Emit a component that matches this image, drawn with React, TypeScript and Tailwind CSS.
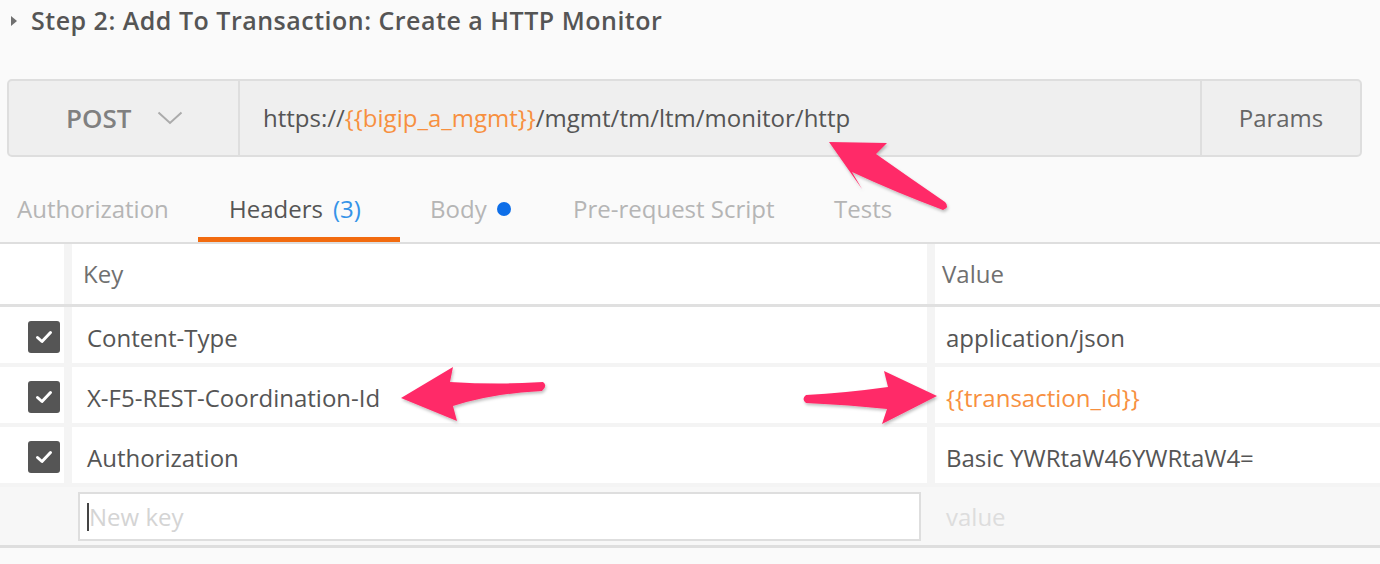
const rows = [
  { key: "Content-Type", value: "application/json", varValue: false },
  { key: "X-F5-REST-Coordination-Id", value: "{{transaction_id}}", varValue: true },
  { key: "Authorization", value: "Basic YWRtaW46YWRtaW4=", varValue: false },
];

function Checkbox() {
  return (
    <div className="w-[32px] h-[32px] rounded-[3px] bg-[#555555] grid place-items-center">
      <svg width="18" height="14" viewBox="0 0 18 14" fill="none">
        <path d="M2.5 7.5 L7 11.5 L15.5 2.5" stroke="white" strokeWidth="3" strokeLinecap="round" strokeLinejoin="round" />
      </svg>
    </div>
  );
}

function Arrows() {
  // callout arrows drawn over the screenshot
  return (
    <svg className="absolute inset-0 pointer-events-none" width="1380" height="564" viewBox="0 0 1380 564">
      <defs>
        <filter id="sh" x="-20%" y="-20%" width="140%" height="140%">
          <feDropShadow dx="1" dy="2" stdDeviation="1.5" floodColor="#000" floodOpacity="0.25" />
        </filter>
      </defs>
      <g fill="#ff2b68" filter="url(#sh)">
        <path d="M829 142 L887 143 L876 154 Q910 178 945 202 Q950 207 943 210 Q895 192 852 172 L862 189 Z" />
        <path d="M401 398 L453 367 L450 382 Q500 385 543 382 Q548 386 542 391 Q495 393 453 406 L457 421 Z" />
        <path d="M937 396 L884 371 L888 387 Q845 393 806 395 Q801 399 806 403 Q850 405 887 409 L882 424 Z" />
      </g>
    </svg>
  );
}

function Tab({ w, pl, active, children }: { w?: string; pl: string; active?: boolean; children: React.ReactNode }) {
  return (
    <div
      className={`${w ?? ""} ${pl} h-[62px] flex items-center gap-[10px] border-b-[5px] ${
        active ? "border-[#f26b0f] text-[#555555]" : "border-transparent text-[#b5b5b5]"
      }`}
    >
      {children}
    </div>
  );
}

export default function App() {
  return (
    <div className="relative w-[1380px] h-[564px] bg-[#fafafa] overflow-hidden font-['Open_Sans',sans-serif] text-[#505050]">
      {/* title */}
      <div className="h-[42px] flex items-center pl-[10px] gap-[13px]">
        <svg width="8" height="12" viewBox="0 0 8 12">
          <path d="M1 1 L7 6 L1 11 Z" fill="#707070" />
        </svg>
        <span className="text-[25px] font-semibold text-[#555555] tracking-[0.5px]">Step 2: Add To Transaction: Create a HTTP Monitor</span>
      </div>

      {/* request bar */}
      <div className="mt-[37px] mx-[7px] w-[1355px] h-[78px] flex border-2 border-[#dedede] rounded-[5px] bg-[#efefef]">
        <div className="w-[231px] flex items-center pl-[57px] gap-[26px] border-r-2 border-[#dedede]">
          <span className="text-[26px] font-semibold text-[#808080]">POST</span>
          <svg width="26" height="14" viewBox="0 0 26 14" fill="none">
            <path d="M1.5 1.5 L13 12 L24.5 1.5" stroke="#ababab" strokeWidth="2" />
          </svg>
        </div>
        <div className="flex-1 flex items-center pl-[23px] text-[24px] text-[#555555]">
          <span>https://</span>
          <span className="text-[#f7903f]">{"{{bigip_a_mgmt}}"}</span>
          <span>/mgmt/tm/ltm/monitor/http</span>
        </div>
        <div className="w-[160px] border-l-2 border-[#dedede] flex items-center justify-center text-[24px] text-[#666666]">
          Params
        </div>
      </div>

      {/* tabs */}
      <div className="h-[85px] flex items-end text-[24px]">
        <Tab w="w-[198px]" pl="pl-[17px]">Authorization</Tab>
        <Tab w="w-[202px]" pl="pl-[31px]" active>
          <span>Headers</span>
          <span className="text-[#3593e8]">(3)</span>
        </Tab>
        <Tab w="w-[143px]" pl="pl-[30px]">
          <span>Body</span>
          <span className="w-[14px] h-[14px] rounded-full bg-[#0d6ee8]" />
        </Tab>
        <Tab w="w-[261px]" pl="pl-[30px]">Pre-request Script</Tab>
        <Tab pl="pl-[30px]">Tests</Tab>
      </div>

      {/* headers table */}
      <div className="border-t-2 border-[#dedede] bg-[#f4f4f4] text-[24px]">
        <div className="h-[63px] flex gap-[8px] border-b-[3px] border-[#e0e0e0]">
          <div className="w-[64px] bg-white" />
          <div className="w-[855px] bg-white flex items-center pl-[11px] text-[#707070]">Key</div>
          <div className="flex-1 bg-white flex items-center pl-[7px] text-[#707070]">Value</div>
        </div>
        <div className="flex flex-col gap-[4px]">
          {rows.map((r) => (
            <div key={r.key} className="h-[56px] flex gap-[8px]">
              <div className="w-[64px] bg-white flex items-center justify-end pr-[4px] pt-[4px]">
                <Checkbox />
              </div>
              <div className="w-[855px] bg-white flex items-center pl-[15px] pt-[5px] text-[#555555]">{r.key}</div>
              <div
                className={`flex-1 bg-white flex items-center pl-[11px] pt-[5px] ${
                  r.varValue ? "text-[#f7903f]" : "text-[#555555]"
                }`}
              >
                {r.value}
              </div>
            </div>
          ))}
          <div className="h-[61px] pt-[1px] flex items-center bg-[#f7f7f7] border-b-[3px] border-[#dedede]">
            <div className="w-[78px]" />
            <div className="w-[843px] h-[49px] bg-white border-2 border-[#dedede] flex items-center pl-[7px]">
              <span className="w-[2px] h-[28px] bg-[#444444]" />
              <span className="text-[#d4d4d4]">New key</span>
            </div>
            <div className="pl-[25px] text-[#dddddd]">value</div>
          </div>
        </div>
      </div>

      <Arrows />
    </div>
  );
}
